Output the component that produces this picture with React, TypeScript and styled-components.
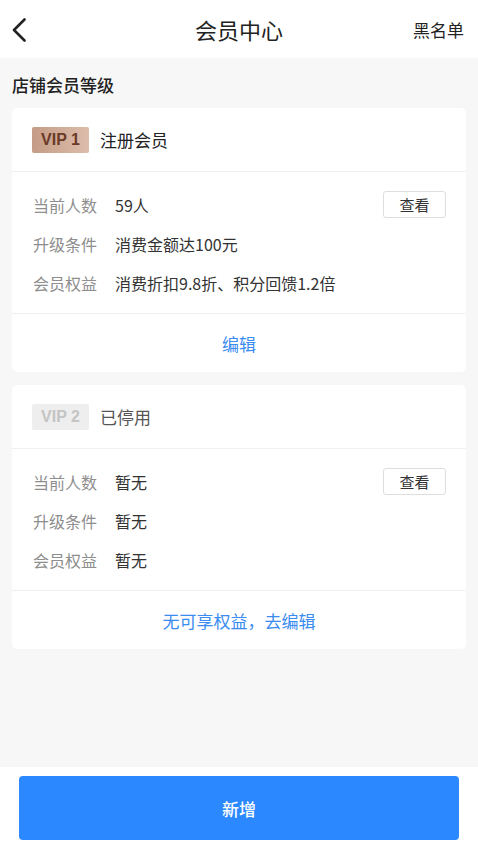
import React from 'react'
import styled, { createGlobalStyle } from 'styled-components'

interface Level {
  vip: string
  name: string
  active: boolean
  count: string
  condition: string
  benefit: string
  action: string
}

const levels: Level[] = [
  {
    vip: 'VIP 1',
    name: '注册会员',
    active: true,
    count: '59人',
    condition: '消费金额达100元',
    benefit: '消费折扣9.8折、积分回馈1.2倍',
    action: '编辑',
  },
  {
    vip: 'VIP 2',
    name: '已停用',
    active: false,
    count: '暂无',
    condition: '暂无',
    benefit: '暂无',
    action: '无可享权益，去编辑',
  },
]

export default function App() {
  return (
    <>
      <GlobalStyle />
      <Page>
        <Header>
          <Back aria-label="返回">
            <svg width="14" height="24" viewBox="0 0 14 24">
              <polyline points="12.5,1.5 2,12 12.5,22.5" fill="none" stroke="#222" strokeWidth="2.6" strokeLinecap="round" strokeLinejoin="round" />
            </svg>
          </Back>
          <Title>会员中心</Title>
          <HeaderLink>黑名单</HeaderLink>
        </Header>

        <Content>
          <SectionTitle>店铺会员等级</SectionTitle>
          {levels.map(level => (
            <Card key={level.vip}>
              <CardHead>
                <Badge active={level.active}>{level.vip}</Badge>
                <LevelName active={level.active}>{level.name}</LevelName>
              </CardHead>
              <CardBody>
                <Row>
                  <Label>当前人数</Label>
                  <Value>{level.count}</Value>
                  <ViewButton>查看</ViewButton>
                </Row>
                <Row>
                  <Label>升级条件</Label>
                  <Value>{level.condition}</Value>
                </Row>
                <Row>
                  <Label>会员权益</Label>
                  <Value>{level.benefit}</Value>
                </Row>
              </CardBody>
              <CardFoot>{level.action}</CardFoot>
            </Card>
          ))}
        </Content>

        <Footer>
          <AddButton>新增</AddButton>
        </Footer>
      </Page>
    </>
  )
}

const GlobalStyle = createGlobalStyle`
  html, body {
    margin: 0;
    padding: 0;
    background: #f7f7f7;
  }
  body {
    font-family: "Noto Sans CJK SC", "Noto Sans", sans-serif;
    color: #222;
  }
  * {
    box-sizing: border-box;
  }
`

const Page = styled.div`
  min-height: 100vh;
  display: flex;
  flex-direction: column;
  background: #f7f7f7;
`

const Header = styled.div`
  height: 58px;
  background: #fff;
  display: flex;
  align-items: center;
  justify-content: space-between;
  padding: 0 14px 0 12px;
  position: relative;
`

const Back = styled.div`
  width: 40px;
  display: flex;
  align-items: center;
  padding-top: 2px;
`

const Title = styled.div`
  position: absolute;
  left: 0;
  right: 0;
  text-align: center;
  font-size: 22px;
  line-height: 30px;
  color: #222;
  pointer-events: none;
`

const HeaderLink = styled.div`
  font-size: 17px;
  color: #222;
`

const Content = styled.div`
  flex: 1;
  padding: 0 12px 20px;
`

const SectionTitle = styled.div`
  padding-top: 16px;
  margin-bottom: 12px;
  font-size: 17px;
  line-height: 22px;
  font-weight: 500;
  color: #222;
`

const Card = styled.div`
  background: #fff;
  border-radius: 5px;
  margin-bottom: 13px;
`

const CardHead = styled.div`
  height: 64px;
  display: flex;
  align-items: center;
  gap: 11px;
  padding: 0 20px;
  border-bottom: 1px solid #f0f0f0;
`

const Badge = styled.span<{ active: boolean }>`
  width: 57px;
  height: 26px;
  display: inline-flex;
  align-items: center;
  justify-content: center;
  border-radius: 2px;
  font-family: "Liberation Sans", Arial, sans-serif;
  font-size: 16px;
  font-weight: 700;
  color: ${p => (p.active ? '#6b3a28' : '#c4c4c4')};
  background: ${p => (p.active ? 'linear-gradient(90deg, #c59c86, #dcbdab)' : '#eeeeee')};
`

const LevelName = styled.span<{ active: boolean }>`
  font-size: 17px;
  color: ${p => (p.active ? '#222' : '#555')};
`

const CardBody = styled.div`
  padding: 13px 20px 11px 21px;
  border-bottom: 1px solid #f0f0f0;
`

const Row = styled.div`
  height: 39px;
  display: flex;
  align-items: center;
`

const Label = styled.span`
  width: 82px;
  flex-shrink: 0;
  font-size: 16px;
  color: #8e8e8e;
`

const Value = styled.span`
  flex: 1;
  font-size: 16px;
  color: #333;
`

const ViewButton = styled.button`
  width: 63px;
  height: 27px;
  border: 1px solid #dedede;
  border-radius: 3px;
  background: #fff;
  font-family: inherit;
  font-size: 15px;
  color: #333;
  padding: 0;
`

const CardFoot = styled.div`
  height: 58px;
  display: flex;
  align-items: center;
  justify-content: center;
  font-size: 17px;
  color: #3b8cf0;
`

const Footer = styled.div`
  background: #fff;
  padding: 9px 19px 10px;
`

const AddButton = styled.button`
  width: 100%;
  height: 64px;
  border: none;
  border-radius: 4px;
  background: #2b88ff;
  color: #fff;
  font-family: inherit;
  font-size: 17px;
  font-weight: 500;
`
